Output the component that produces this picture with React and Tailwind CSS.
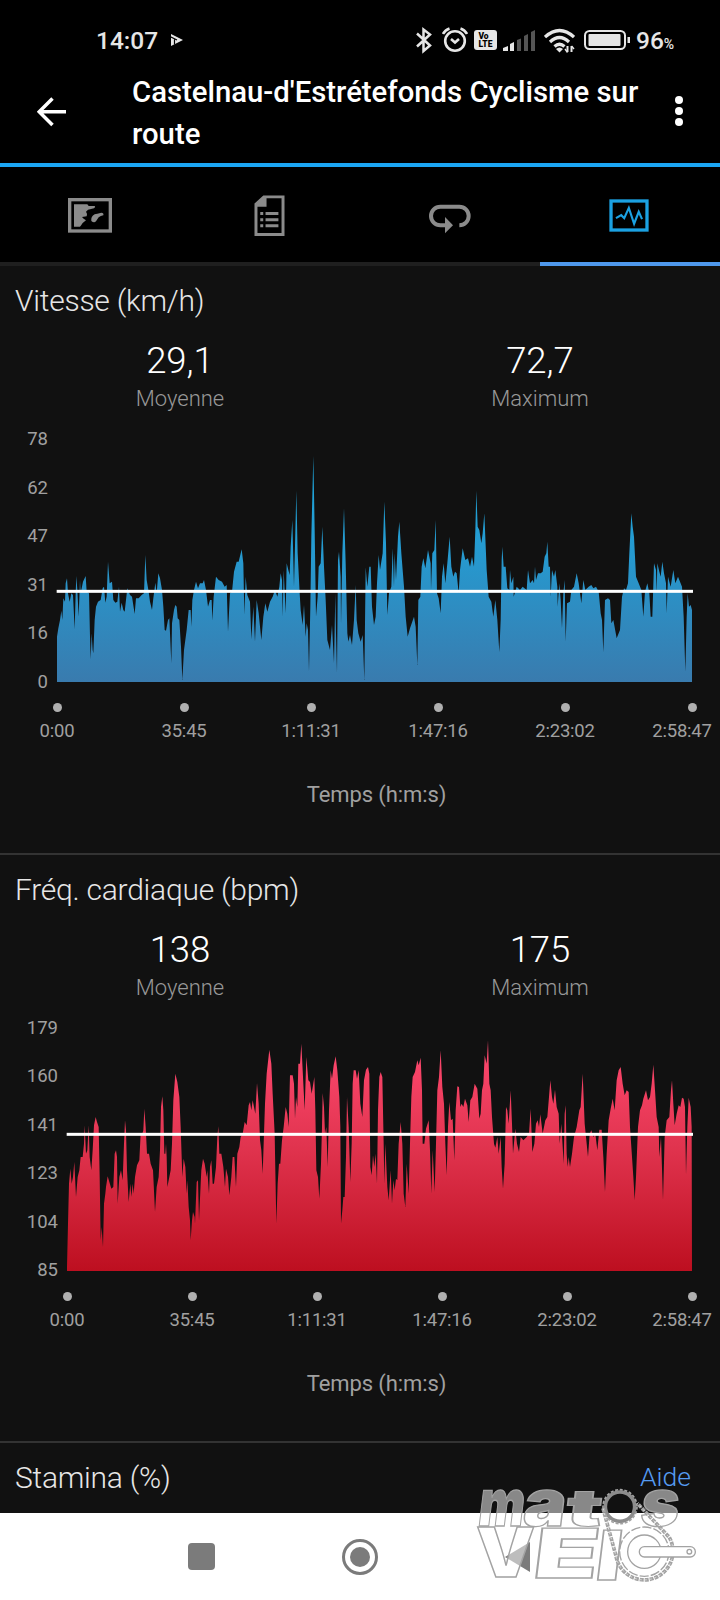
// Traces are drawn in thirds of a pixel; each chunk starts at its own x offset.
const speedTrace = [
  [0, "171,650 175,625 180,600 184,572 187,600 190,535 195,545 197,490 201,475 204,520 209,545 214,520 219,525 224,628 227,520 229,468 232,510 236,590 240,480 242,520 246,500 249,485 257,468 260,515 267,520 270,650 272,718 275,640 278,690 280,700 284,600 288,560 294,545 302,540 308,505 312,500 316,548 320,530 324,425 329,490 336,485 340,540 346,548 352,545 357,500 360,575 365,548 370,570 374,575 378,540 382,505 390,525 396,530 404,582 408,535 416,535 425,525 432,520 436,405 440,480 446,515 450,545 456,570 460,535 466,488 470,520 475,460 480,475 486,510 490,560 494,630 498,632 504,600 508,595 514,730 516,610 522,570 526,555 530,560 533,595 538,600 543,680 547,780 552,690 560,630 566,570 572,570 574,620 577,540 582,510 588,485 594,505 600,490 608,490 612,480 618,510 624,560 630,540 635,540 637,602 641,530 648,470 656,480 666,485 674,500 680,495 684,635 690,520 696,515 702,455 710,425 716,425"],
  [720, "5,388 10,430 13,585 17,470 22,525 30,545 34,658 40,560 45,665 50,540 56,580 64,660 70,590 76,550 82,575 90,545 98,530 105,510 112,530 118,500 122,460 126,480 128,590 131,450 137,580 140,430 145,450 149,465 152,380 157,300 162,500 169,212 173,400 179,520 182,570 188,615 192,555 197,650 200,610 204,630 207,755 211,560 214,350 220,108 224,330 228,590 233,530 236,440 242,430 247,320 252,440 257,540 262,660 270,690 276,615 282,730 286,520 288,640 291,760 294,420 297,395 302,470 303,615 307,400 312,265 317,430 322,640 325,665 330,645 336,675 342,600 347,495 350,600 355,640 362,665 368,645 373,780 377,442 382,500 388,440 392,440 396,560 402,615 407,590 411,490 416,405 420,450 428,400 433,245 438,370 442,585 447,520 454,500 458,385 462,500 464,400 468,480 474,350 478,305 484,400 492,500 497,590 503,650 510,625 522,590 527,620 532,735 535,540 541,530 545,440 550,415 556,445 564,390 572,430 573,510 577,400 583,390 587,300 591,520 596,535 602,580 606,470 611,430 616,490 622,430 629,350 634,440 640,470 645,455 650,460 656,520 660,450 668,385 676,420 684,415 690,440 696,410 702,440 706,330 709,212 713,320 718,330 724,370 728,340 733,280"],
  [1410, "50,450 56,530 64,545 70,590 76,540 82,600 88,697 92,600 95,420 97,380 101,440 107,440 112,505 118,510 120,450 124,490 130,470 131,530 140,500 150,510 158,500 170,510 174,450 180,490 188,480 192,490 195,440 198,480 204,460 212,460 218,455 224,410 229,400 232,365 236,440 240,440 242,530 246,450 252,470 256,450 262,500 263,560 268,490 272,540 276,625 280,520 284,480 287,665 291,550 300,545 304,510 312,500 320,460 326,490 334,550 340,480 346,510 356,500 364,495 370,505 378,500 386,515 392,580 396,600 400,697 405,540 414,535 420,540 424,610 430,600 440,655 450,630 456,530 462,505 468,510 474,490 478,400 484,280 488,320 492,350 498,470 506,490 514,510 520,590 525,515 532,490 538,520 542,590 547,590 552,430 558,450 560,520 562,430 568,455 572,470 577,425 582,460 588,490 590,580 594,470 602,500 610,450 616,490 624,470 630,485 636,500 641,590 646,755 650,590 653,520 657,560 662,555 666,570"],
];

const heartTrace = [
  [0, "201,770 204,640 207,520 211,475 215,520 219,500 223,455 228,560 233,500 238,480 242,440 248,440 252,400 254,345 258,430 262,420 266,345 269,440 274,480 278,420 282,345 287,320 291,335 296,350 299,500 302,690 305,650 309,710 312,580 316,550 318,530 323,498 328,515 334,535 340,530 344,430 348,420 351,440 353,580 358,500 363,480 368,510 372,400 375,330 378,360 381,480 386,575 391,520 394,560 398,520 401,550 405,500 411,465 418,450 422,370 427,370 430,360 433,295 437,350 441,430 447,430 452,460 459,480 465,605 470,530 476,500 480,420 483,290 487,258 490,300 493,430 496,430 498,400 500,440 502,530 508,500 512,480 516,400 520,270 526,190 532,215 538,260 542,350 547,500 551,445 556,470 560,550 562,510 566,590 570,630 572,690 576,630 579,605 584,620 585,640 590,515 594,510 597,632 602,520 604,480 609,445 614,460 620,500 622,480 627,550 630,470 634,450 638,520 642,520 648,470 652,380 655,348 658,430 664,430 670,470 675,530 678,475 684,500 688,555 694,500 698,440 703,440 708,530 712,430 718,410"],
  [720, "2,380 8,370 14,335 20,345 26,285 30,275 34,300 38,270 42,290 46,310 51,218 56,280 60,390 64,420 68,490 71,400 75,280 80,190 88,118 94,160 98,250 104,370 106,480 109,640 113,520 117,460 121,460 126,390 131,350 137,290 142,310 146,350 150,195 158,195 162,220 165,325 168,260 172,290 175,160 180,160 184,100 188,180 194,300 199,140 205,210 210,215 215,250 223,200 226,300 229,480 234,500 238,565 243,460 246,350 248,248 252,290 255,370 259,350 263,470 267,300 272,180 276,205 281,165 287,138 292,180 298,260 301,350 303,640 307,600 310,560 314,560 318,440 321,260 326,350 331,515 335,400 338,220 341,180 347,180 351,205 356,180 361,280 367,320 372,210 378,178 384,170 388,190 391,470 395,495 399,435 403,470 407,430 411,520 414,300 418,200 422,185 427,200 431,400 433,520 436,400 442,530 446,570 452,480 456,580 460,510 464,540 468,505 472,510 476,400 482,335 487,400 491,550 496,590 500,460 506,550 510,400 514,260 518,200 525,185 532,150 536,165 542,142 546,240 548,400 553,400 558,355 566,330 570,420 574,550 578,420 584,545 588,400 592,240 597,200 602,120 607,230 612,280 616,400 620,495 624,350 628,275 633,330 638,325 643,450 647,300 652,228 657,230 661,290 665,280 670,290 675,265 682,285 686,335 691,270 697,260 704,220 712,235 718,325 722,310"],
  [1410, "36,240 40,220 44,135 50,160 54,90 58,220 62,240 66,320 72,400 76,412 82,380 86,430 92,380 95,470 99,535 104,460 108,290 112,300 116,340 122,240 126,340 129,430 136,355 141,400 147,425 152,380 160,390 170,380 177,370 182,295 187,425 193,400 198,340 203,330 207,350 211,312 218,370 226,330 232,320 237,260 241,210 246,260 250,280 255,238 260,290 266,310 269,400 274,340 281,460 284,310 287,285 290,430 293,470 296,440 300,470 306,430 312,380 320,350 328,300 332,290 338,190 344,340 350,400 354,440 359,370 364,360 370,380 376,370 382,420 388,358 395,358 400,440 405,545 410,430 416,330 422,295 428,265 434,300 440,210 446,180 452,170 458,220 464,255 470,240 476,245 480,350 486,440 490,500 494,570 498,500 504,350 510,300 516,285 520,265 528,240 534,270 540,260 545,220 550,163 555,240 560,320 566,350 568,440 573,380 579,570 584,380 590,330 598,320 603,240 606,210 610,280 614,345 620,310 626,285 631,290 636,262 641,265 645,290 648,495 652,350 656,262 662,290 665,350"],
];

const times = ["0:00", "35:45", "1:11:31", "1:47:16", "2:23:02", "2:58:47"];

function areaPoints(trace, left, base) {
  const line = trace.flatMap(([offset, points]) =>
    points.split(" ").map((p) => {
      const [x, y] = p.split(",").map(Number);
      return `${x + offset},${y}`;
    })
  );
  return [`${left},${base}`, ...line, `2076,${base}`].join(" ");
}

function StatusBar() {
  return (
    <div className="flex h-[71px] items-start pl-[96px] pt-[26px] text-[#e6e6e6]">
      <span className="w-[62px] text-[24.5px] font-medium leading-[30px]">14:07</span>
      <svg className="ml-[12px] mt-[7px] h-[14px] w-[13px]" viewBox="0 0 13 14">
        <path d="M1 1 13 7 1 13Z" fill="currentColor" />
        <path d="M0 3.500 7 7M4.500 6.500v5" stroke="#000" strokeWidth="1.200" />
      </svg>
      <svg className="ml-[233px] h-[28px] w-[16px]" viewBox="0 0 16 28" fill="none" stroke="currentColor" strokeWidth="2.5">
        <path d="M1 7.5 14 19.5 7.5 25V3.500L14 8.500 1 20.500" />
      </svg>
      <svg className="ml-[10px] h-[28px] w-[26px]" viewBox="0 0 26 28" fill="none" stroke="currentColor" strokeWidth="2.6">
        <circle cx="13" cy="15" r="9.800" />
        <path d="M1 8Q3 4 7.500 2.500M25 8Q23 4 18.500 2.500M9 13l4 3.500 4-3.500" />
      </svg>
      <div className="ml-[6px] mt-[4px] flex h-[20px] w-[23px] flex-col items-center justify-center rounded-[3px] bg-[#e6e6e6] text-[8.500px] font-black leading-[8px] text-black">
        <span className="-ml-1">Vo</span>
        <span>LTE</span>
      </div>
      <svg className="ml-[6px] mt-[4px] h-[21px] w-[32px]" viewBox="0 0 32 21" fill="#555">
        <path d="M0 21v-3l5-2v5zM7 21v-7l4-2v9z" fill="#e6e6e6" />
        <path d="M14 21V10l4-1.500V21zM21 21V6l4-2v17zM28 21V2l4-2v21z" />
      </svg>
      <svg className="ml-[9px] mt-[2px] h-[25px] w-[31px]" viewBox="0 0 31 25" fill="none" stroke="currentColor" strokeWidth="3.2">
        <path d="M1 9Q15.500-4 30 9M6 14Q15.500 5 25 14M10.500 18.500Q15.500 14 20.500 18.500" />
        <path d="M12 21Q15.500 18 19 21L15.500 24.500Z" fill="currentColor" stroke="none" />
        <path d="M23.500 18v6M27.500 18v6" strokeWidth="2" />
        <path d="M21 21l2.500 3.500M30 21l-2.500-3" strokeWidth="1.400" />
      </svg>
      <svg className="ml-[9px] mt-[4px] h-[20px] w-[46px]" viewBox="0 0 46 20">
        <rect x="1" y="1" width="40" height="18" rx="4.500" fill="none" stroke="#e6e6e6" strokeWidth="2" />
        <rect x="4.500" y="4" width="32" height="12" rx="1" fill="#e6e6e6" />
        <rect x="43.500" y="7" width="2.500" height="6" fill="#e6e6e6" />
      </svg>
      <span className="ml-[6px] text-[24.500px] font-medium leading-[30px]">
        96<span className="text-[14px]">%</span>
      </span>
    </div>
  );
}

function Header() {
  return (
    <header className="h-[167px] border-b-4 border-[#1ba6f4]">
      <StatusBar />
      <div className="flex pl-[37px] text-white">
        <svg className="mt-[26px] h-[30px] w-[30px]" viewBox="0 0 30 30" fill="none" stroke="currentColor" strokeWidth="3.500">
          <path d="M29 14.700H3M15.500 1.500 2.200 14.700 15.500 28" />
        </svg>
        <h1 className="ml-[65px] w-[520px] text-[29.3px] font-medium leading-[42px]">
          Castelnau-d'Estrétefonds Cyclisme sur route
        </h1>
        <div className="ml-[23px] mt-[25px] flex flex-col gap-[3px]">
          <span className="h-2 w-2 rounded-full bg-white" />
          <span className="h-2 w-2 rounded-full bg-white" />
          <span className="h-2 w-2 rounded-full bg-white" />
        </div>
      </div>
    </header>
  );
}

function Tabs() {
  return (
    <nav className="grid h-[99px] grid-cols-4 text-[#8b8b8b]">
      <div className="flex justify-center border-b-4 border-[#1f1f1f] pt-[31px]">
        <svg className="h-[35px] w-[44px]" viewBox="204 595 132 105">
          <rect x="209" y="600" width="122" height="94" fill="none" stroke="currentColor" strokeWidth="10" />
          <path fill="currentColor" d="M222 614H262l4 5h18q4 3-2 7l-18 4-6 6q6 8 2 14l-14 2q4 6 12 10l-10 8-4 6-4 5H222ZM274 664q-2-14 10-20l8-2 12-3q8 0 6 8-8 2-14 6l-8 12q-6 6-14-1Z" />
        </svg>
      </div>
      <div className="flex justify-center border-b-4 border-[#1f1f1f] pr-[2px] pt-[28px]">
        <svg className="h-[42px] w-[31px]" viewBox="762 585 94 126">
          <path d="M792 590H850V704H768V612Z" fill="none" stroke="currentColor" strokeWidth="9" />
          <path fill="currentColor" d="M766 612 792 588H800V620H766ZM797 636h39v9h-39zM797 655h39v9h-39zM797 673h39v9h-39zM781 636h9v9h-9zM781 655h9v9h-9zM781 673h9v9h-9z" />
        </svg>
      </div>
      <div className="flex justify-center border-b-4 border-[#1f1f1f] pt-[37px]">
        <svg className="h-[30px] w-[42px]" viewBox="206 612 126 90">
          <path d="M256 676H240A28 28 0 0 1 240 620H297A28 28 0 0 1 297 676" fill="none" stroke="currentColor" strokeWidth="12" />
          <path d="M254 651V700L278 676Z" fill="currentColor" />
        </svg>
      </div>
      <div className="flex justify-center border-b-4 border-[#4f98ec] pr-[2px] pt-[32px] text-[#1ba1e2]">
        <svg className="h-[33px] w-[40px]" viewBox="748 596 121 100" fill="none" stroke="currentColor">
          <rect x="754" y="602" width="109" height="88" strokeWidth="10" />
          <path d="M769 654 785 645 794 654 808 623 824 671 838 635 848 657" strokeWidth="6.500" />
        </svg>
      </div>
    </nav>
  );
}

function Stat({ value, label }) {
  return (
    <div className="flex flex-col items-center">
      <span className="text-[36.5px] font-light leading-[42px] text-white">{value}</span>
      <span className="mt-[2px] text-[22px] font-light leading-[30px] text-[#989898]">{label}</span>
    </div>
  );
}

function TimeAxis() {
  return (
    <div className="flex justify-between">
      {times.map((time, i) => (
        <div key={time} className="flex w-0 flex-col items-center">
          <span className="h-[9px] w-[9px] rounded-full bg-[#b0b0b0]" />
          <span className={`mt-[7px] text-[18.500px] leading-[24px] tracking-[-0.2px] text-[#a0a0a0] ${i === 5 ? "-translate-x-[10px]" : ""}`}>
            {time}
          </span>
        </div>
      ))}
    </div>
  );
}

function Chart({ id, title, average, maximum, scale, trace, left, top, base, mean, colors }) {
  const wide = left > 180;
  return (
    <section className="h-[588.500px] border-b-2 border-[#333]">
      <h2 className="pl-[15px] pt-[17px] text-[30px] font-light leading-[35px] tracking-[-0.25px] text-[#e6e6e6]">{title}</h2>
      <div className="mt-[22px] grid h-[73px] grid-cols-2">
        <Stat value={average} label="Moyenne" />
        <Stat value={maximum} label="Maximum" />
      </div>
      <div className="mt-[12px] flex">
        <div className={`mt-[2px] flex h-[267px] flex-col justify-between text-right text-[18.500px] leading-[24px] text-[#a0a0a0] ${wide ? "w-[58px]" : "w-[48px]"}`}>
          {scale.map((n) => (
            <span key={n}>{n}</span>
          ))}
        </div>
        <div className={wide ? "ml-[9px] w-[625px]" : "ml-[9px] w-[635px]"}>
          <svg className="block h-[257px] w-full overflow-visible" viewBox={`${left} ${top} ${2076 - left} 771`} preserveAspectRatio="none">
            <defs>
              <linearGradient id={id} gradientUnits="userSpaceOnUse" x1="0" x2="0" y1={base - 686} y2={base}>
                <stop offset="0" stopColor={colors[0]} />
                <stop offset="0.45" stopColor={colors[1]} />
                <stop offset="1" stopColor={colors[2]} />
              </linearGradient>
            </defs>
            <polygon points={areaPoints(trace, left, base)} fill={`url(#${id})`} />
            <rect x={left - 1} y={mean - 4.5} width={2080 - left} height="9" fill="#fff" />
          </svg>
          <div className="mt-[21px]">
            <TimeAxis />
          </div>
        </div>
      </div>
      <p className="mt-[38px] pl-[33px] text-center text-[22px] leading-[28px] tracking-[-0.1px] text-[#a0a0a0]">Temps (h:m:s)</p>
    </section>
  );
}

function Logo() {
  const outline = { stroke: "#a3a3a3", strokeWidth: 4, fill: "#fff", fillOpacity: 0.5 };
  return (
    <svg className="absolute left-[460px] top-[1440px] h-[160px] w-[260px] overflow-visible" viewBox="60 0 780 480" fontFamily="Inter, sans-serif" fontWeight="900">
      <g {...outline} transform="translate(30 0) skewX(-7)">
        <text x="112" y="257" fontSize="196" textLength="138" lengthAdjust="spacingAndGlyphs">m</text>
        <text x="246" y="257" fontSize="196" textLength="128" lengthAdjust="spacingAndGlyphs">a</text>
        <text transform="translate(374 257) scale(1.400 0.780)" fontSize="196" textLength="78" lengthAdjust="spacingAndGlyphs">t</text>
        <text x="598" y="257" fontSize="196" textLength="116" lengthAdjust="spacingAndGlyphs">s</text>
      </g>
      <g {...outline}>
        <text x="108" y="412" fontSize="206" textLength="178" lengthAdjust="spacingAndGlyphs">V</text>
        <text transform="translate(274 415) skewX(-7)" fontSize="206" textLength="195" lengthAdjust="spacingAndGlyphs">E</text>
        <text transform="translate(460 419) skewX(-7)" fontSize="206" textLength="80" lengthAdjust="spacingAndGlyphs">l</text>
      </g>
      <g fill="none" stroke="#a3a3a3">
        <circle cx="540" cy="200" r="44" stroke="#8c8c8c" strokeWidth="11" />
        <circle cx="540" cy="200" r="51" strokeWidth="5" strokeDasharray="9 5" />
        <circle cx="613" cy="335" r="74" fill="#fff" fillOpacity="0.5" strokeWidth="4" strokeDasharray="28 6" />
        <path d="M489 205 528 348A86 86 0 1 0 688 292L592 190" strokeWidth="11" strokeDasharray="12 3" />
        <path d="M489 205 528 348A86 86 0 1 0 688 292L592 190" stroke="#ddd" strokeWidth="3" strokeDasharray="6 9" />
        <circle cx="613" cy="335" r="50" strokeWidth="4" />
        <rect x="598" y="320" width="168" height="31" rx="15" fill="#fff" strokeWidth="4" />
        <circle cx="748" cy="335" r="7" strokeWidth="4" />
      </g>
    </svg>
  );
}

export default function App() {
  return (
    <div className="relative h-[1600px] w-[720px] overflow-hidden bg-black font-['Roboto',sans-serif]">
      <Header />
      <Tabs />
      <main className="h-[1247px] overflow-hidden bg-[#111]">
        <Chart
          id="speed"
          title="Vitesse (km/h)"
          average="29,1"
          maximum="72,7"
          scale={[78, 62, 47, 31, 16, 0]}
          trace={speedTrace}
          left={171}
          top={15}
          base={786}
          mean={514}
          colors={["#1ba9df", "#2699cf", "#397bae"]}
        />
        <Chart
          id="heart"
          title="Fréq. cardiaque (bpm)"
          average="138"
          maximum="175"
          scale={[179, 160, 141, 123, 104, 85]}
          trace={heartTrace}
          left={201}
          top={11}
          base={782}
          mean={372}
          colors={["#ff4970", "#e1344f", "#bd0f20"]}
        />
        <section className="flex justify-between pl-[15px] pr-[29px] pt-[17px] font-light">
          <h2 className="text-[30px] leading-[35px] tracking-[-0.25px] text-[#e6e6e6]">Stamina (%)</h2>
          <a className="text-[26.5px] leading-[34px] text-[#559bf2]">Aide</a>
        </section>
      </main>
      <footer className="flex h-[87px] items-center bg-white pl-[188px] text-[#7b7b7b]">
        <span className="h-[27px] w-[27px] rounded-[4px] bg-[#7b7b7b]" />
        <span className="ml-[127px] flex h-[36px] w-[36px] items-center justify-center rounded-full border-3 border-[#7b7b7b]">
          <span className="h-[20px] w-[20px] rounded-full bg-[#7b7b7b]" />
        </span>
        <svg className="ml-[127px] h-[30px] w-[25px]" viewBox="0 0 25 30">
          <path d="M0 15 25 0V30Z" fill="currentColor" />
        </svg>
      </footer>
      <Logo />
    </div>
  );
}
